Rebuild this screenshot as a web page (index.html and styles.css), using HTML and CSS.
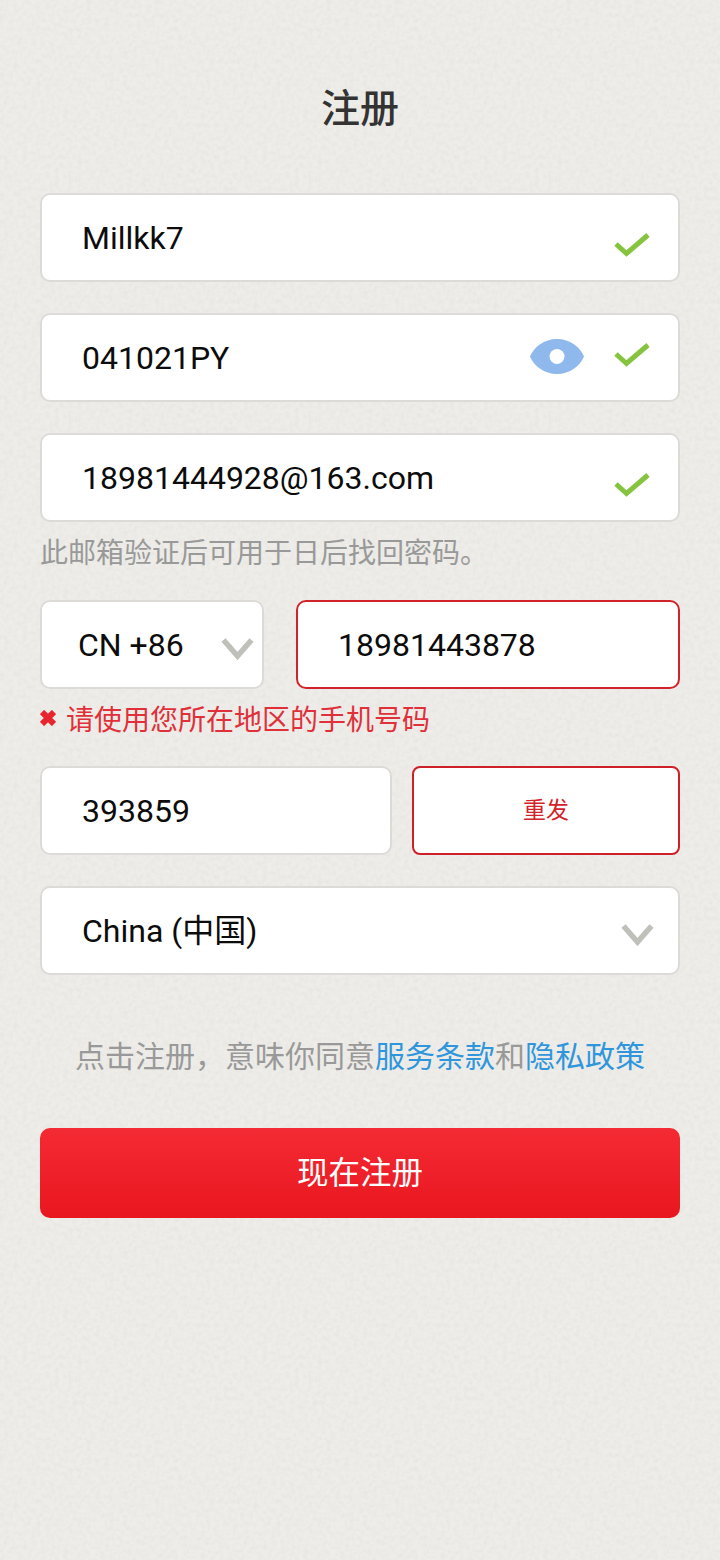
FILE: index.html
```html
<!DOCTYPE html>
<html lang="zh">
<head>
  <meta charset="utf-8">
  <title>注册</title>
  <link rel="stylesheet" href="styles.css">
</head>
<body>
<div class="page">
  <h1 class="title">注册</h1>

  <div class="field">
    <span class="value">Millkk7</span>
    <svg class="check check-low" viewBox="0 0 36 25"><path d="M2 12 L12.500 21.500 L34 3"/></svg>
  </div>

  <div class="field gap">
    <span class="value">041021PY</span>
    <svg class="eye" viewBox="0 0 54 35"><path d="M0 17.500 C4 8 14 0 27 0 C40 0 50 8 54 17.500 C50 27 40 35 27 35 C14 35 4 27 0 17.500 Z"/><circle cx="27" cy="17.500" r="7.500"/></svg>
    <svg class="check check-high" viewBox="0 0 36 25"><path d="M2 12 L12.500 21.500 L34 3"/></svg>
  </div>

  <div class="field gap">
    <span class="value">18981444928@163.com</span>
    <svg class="check check-low" viewBox="0 0 36 25"><path d="M2 12 L12.500 21.500 L34 3"/></svg>
  </div>
  <p class="hint">此邮箱验证后可用于日后找回密码。</p>

  <div class="row phone-row">
    <div class="field country">
      <span class="value">CN +86</span>
      <svg class="chevron" viewBox="0 0 33 23"><path d="M2.500 3 L16.500 19 L30.500 3"/></svg>
    </div>
    <div class="field phone error-field">
      <span class="value">18981443878</span>
    </div>
  </div>
  <p class="error">
    <svg class="error-x" viewBox="0 0 16 16"><path d="M2 2 L14 14 M14 2 L2 14"/></svg>
    请使用您所在地区的手机号码
  </p>

  <div class="row code-row">
    <div class="field code">
      <span class="value">393859</span>
    </div>
    <div class="resend">重发</div>
  </div>

  <div class="field gap">
    <span class="value">China (中国)</span>
    <svg class="chevron chevron-wide" viewBox="0 0 33 23"><path d="M2.500 3 L16.500 19 L30.500 3"/></svg>
  </div>

  <p class="terms">点击注册，意味你同意<a href="#">服务条款</a>和<a href="#">隐私政策</a></p>

  <div class="submit">现在注册</div>
</div>
</body>
</html>
```

FILE: styles.css
```css
html, body {
  margin: 0;
  padding: 0;
}
body {
  width: 720px;
  height: 1560px;
  overflow: hidden;
  background-color: #eeede9;
  background-image: url("data:image/svg+xml,%3Csvg xmlns='http://www.w3.org/2000/svg' width='240' height='240'%3E%3Cfilter id='n'%3E%3CfeTurbulence type='fractalNoise' baseFrequency='0.22' numOctaves='3' stitchTiles='stitch'/%3E%3CfeColorMatrix values='0 0 0 0 0.55 0 0 0 0 0.55 0 0 0 0 0.5 0.3 0 0 0 -0.1'/%3E%3C/filter%3E%3Crect width='240' height='240' filter='url(%23n)'/%3E%3C/svg%3E");
  font-family: Roboto, "Noto Sans CJK SC", sans-serif;
}
.page {
  display: flex;
  flex-direction: column;
  padding: 81px 40px 0;
}
.title {
  margin: 0 0 64px;
  height: 48px;
  line-height: 48px;
  font-family: "Noto Sans CJK SC", sans-serif;
  font-size: 39px;
  font-weight: 500;
  text-align: center;
  color: #333;
}
.field {
  box-sizing: border-box;
  display: flex;
  align-items: center;
  height: 89px;
  padding-left: 40px;
  padding-right: 28px;
  background: #fff;
  border: 2px solid #dcdbd7;
  border-radius: 10px;
}
.gap {
  margin-top: 31px;
}
.value {
  flex: 1;
  height: 38px;
  line-height: 38px;
  font-size: 32px;
  color: #0c0c0c;
  white-space: nowrap;
}
.check {
  width: 36px;
  height: 25px;
  flex: none;
}
.check path {
  fill: none;
  stroke: #86c440;
  stroke-width: 5;
}
.check-low {
  margin-top: 14px;
}
.check-high {
  margin-top: -6px;
}
.eye {
  width: 54px;
  height: 35px;
  flex: none;
  margin: -3px 30px 0 0;
}
.eye path {
  fill: #8fb8ec;
}
.eye circle {
  fill: #fff;
}
.hint {
  margin: 9px 0 0;
  height: 40px;
  line-height: 40px;
  font-family: "Noto Sans CJK SC", sans-serif;
  font-size: 28px;
  color: #999;
}
.row {
  display: flex;
}
.phone-row {
  margin-top: 29px;
  gap: 32px;
}
.country {
  width: 224px;
  padding-left: 36px;
  padding-right: 8px;
}
.phone {
  flex: 1;
}
.error-field {
  border-color: #d2232a;
}
.chevron {
  width: 33px;
  height: 23px;
  flex: none;
  margin-top: 7px;
}
.chevron path {
  fill: none;
  stroke: #bfc0ba;
  stroke-width: 5.500;
}
.chevron-wide {
  margin-right: -4px;
}
.error {
  display: flex;
  align-items: center;
  gap: 10px;
  margin: 9px 0 0;
  height: 40px;
  line-height: 40px;
  font-family: "Noto Sans CJK SC", sans-serif;
  font-size: 28px;
  color: #e0303a;
}
.error-x {
  width: 16px;
  height: 16px;
  flex: none;
}
.error-x path {
  fill: none;
  stroke: #e8252f;
  stroke-width: 6;
}
.code-row {
  margin-top: 28px;
  gap: 20px;
}
.code {
  width: 352px;
}
.resend {
  flex: 1;
  box-sizing: border-box;
  height: 89px;
  line-height: 80px;
  background: #fff;
  border: 2px solid #cf2029;
  border-radius: 8px;
  font-family: "Noto Sans CJK SC", sans-serif;
  font-size: 23px;
  text-align: center;
  color: #d2232a;
}
.terms {
  margin: 57px 0 0;
  height: 44px;
  line-height: 44px;
  font-family: "Noto Sans CJK SC", sans-serif;
  font-size: 30px;
  text-align: center;
  color: #999;
}
.terms a {
  color: #2f96dc;
  text-decoration: none;
}
.submit {
  margin-top: 52px;
  height: 90px;
  line-height: 84px;
  background: linear-gradient(#f42b34, #e9161f);
  border-radius: 10px;
  font-family: "Noto Sans CJK SC", sans-serif;
  font-size: 31.500px;
  text-align: center;
  color: #fff;
}
```
